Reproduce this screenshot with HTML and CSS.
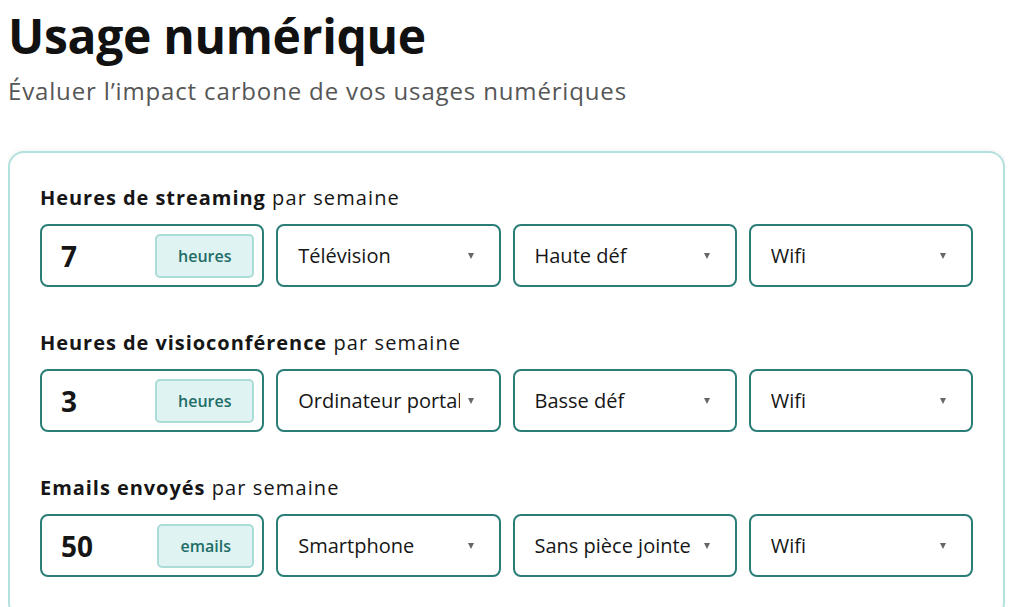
FILE: index.html
```html
<!DOCTYPE html>
<html lang="fr">
<head>
<meta charset="utf-8">
<title>Usage numérique</title>
<link rel="stylesheet" href="styles.css">
</head>
<body>
  <h1 class="title">Usage numérique</h1>
  <p class="subtitle">Évaluer l’impact carbone de vos usages numériques</p>

  <div class="card">
    <div class="row">
      <div class="label"><strong>Heures de streaming</strong> par semaine</div>
      <div class="fields">
        <div class="field number">
          <span class="value">7</span>
          <span class="unit">heures</span>
        </div>
        <div class="field select"><span class="text">Télévision</span><span class="arrow"></span></div>
        <div class="field select"><span class="text">Haute déf</span><span class="arrow"></span></div>
        <div class="field select"><span class="text">Wifi</span><span class="arrow"></span></div>
      </div>
    </div>

    <div class="row">
      <div class="label"><strong>Heures de visioconférence</strong> par semaine</div>
      <div class="fields">
        <div class="field number">
          <span class="value">3</span>
          <span class="unit">heures</span>
        </div>
        <div class="field select"><span class="text">Ordinateur portable</span><span class="arrow"></span></div>
        <div class="field select"><span class="text">Basse déf</span><span class="arrow"></span></div>
        <div class="field select"><span class="text">Wifi</span><span class="arrow"></span></div>
      </div>
    </div>

    <div class="row">
      <div class="label"><strong>Emails envoyés</strong> par semaine</div>
      <div class="fields">
        <div class="field number">
          <span class="value">50</span>
          <span class="unit unit-emails">emails</span>
        </div>
        <div class="field select"><span class="text">Smartphone</span><span class="arrow"></span></div>
        <div class="field select"><span class="text">Sans pièce jointe</span><span class="arrow"></span></div>
        <div class="field select"><span class="text">Wifi</span><span class="arrow"></span></div>
      </div>
    </div>
  </div>
</body>
</html>
```

FILE: styles.css
```css
html, body {
  background: #ffffff;
}

body {
  margin: 8px;
  font-family: "Open Sans", "Noto Sans", Lato, sans-serif;
  color: #161616;
}

.title {
  margin: 0;
  font-size: 48px;
  line-height: 56px;
  font-weight: 700;
  color: #111111;
  letter-spacing: -0.3px;
}

.subtitle {
  margin: 11px 0 0 0;
  font-size: 24px;
  line-height: 32px;
  color: #565656;
  letter-spacing: 0.85px;
}

.card {
  margin-top: 44px;
  border: 2px solid #b2e1de;
  border-radius: 16px;
  padding: 31px 30px 40px 30px;
  box-shadow: 0 0 6px rgba(0, 0, 0, 0.08);
  display: flex;
  flex-direction: column;
  gap: 42px;
}

.row {
  display: flex;
  flex-direction: column;
  gap: 12px;
}

.label {
  font-size: 20px;
  line-height: 28px;
  color: #161616;
  letter-spacing: 1.1px;
}

.label strong {
  font-weight: 700;
  letter-spacing: 0.95px;
}

.fields {
  display: grid;
  grid-template-columns: repeat(4, minmax(0, 1fr));
  gap: 12px;
}

.field {
  box-sizing: border-box;
  min-width: 0;
  height: 63px;
  border: 2px solid #2b7d77;
  border-radius: 8px;
  display: flex;
  align-items: center;
  background: #ffffff;
}

.number {
  padding: 0 8px 0 19px;
  justify-content: space-between;
}

.value {
  font-size: 28px;
  font-weight: 700;
  color: #161616;
}

.unit {
  box-sizing: border-box;
  width: 99px;
  height: 44px;
  display: flex;
  align-items: center;
  justify-content: center;
  background: #dff3f2;
  border: 2px solid #aadcd8;
  border-radius: 5px;
  color: #1f6d67;
  font-size: 16px;
  font-weight: 600;
}

.unit-emails {
  width: 97px;
}

.select {
  padding: 0 25px 0 20px;
  gap: 8px;
}

.select .text {
  flex: 1;
  min-width: 0;
  overflow: hidden;
  white-space: nowrap;
  font-size: 20px;
  color: #161616;
}

.arrow {
  flex: none;
  width: 0;
  height: 0;
  border-left: 3px solid transparent;
  border-right: 3px solid transparent;
  border-top: 6px solid #666666;
}
```
